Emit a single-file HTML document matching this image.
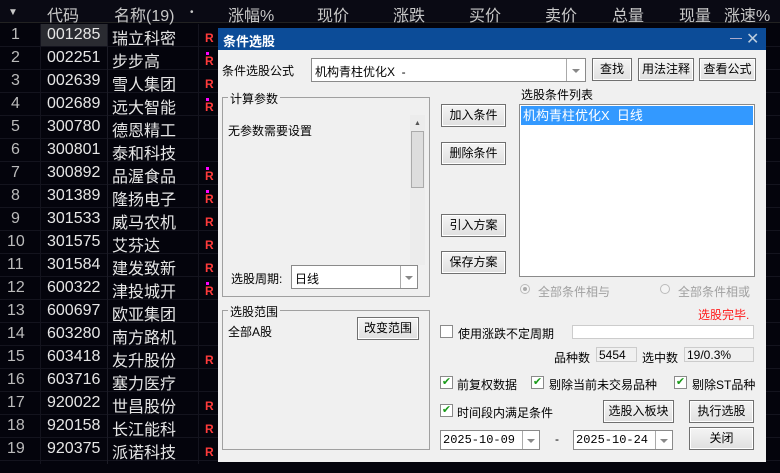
<!DOCTYPE html>
<html><head><meta charset="utf-8"><style>
*{margin:0;padding:0;box-sizing:border-box}
body{width:780px;height:473px;background:#04040c;overflow:hidden;position:relative;font-family:"Liberation Sans","Noto Sans CJK SC",sans-serif}
.a{position:absolute;white-space:nowrap}
.hd{color:#c8c8c8;font-size:16px;top:2px}
.t{font-size:16px;color:#e6e6e6}
.n{font-size:16px;color:#bbb}
.r{color:#ff3b3b;font-size:12px;font-weight:bold}
.m{width:3px;height:3px;background:#f0f}
#dlg{position:absolute;left:218px;top:28px;width:548px;height:434px;background:#f0f0f0;font-size:12px;color:#000}
.d{position:absolute;white-space:nowrap;font-size:12px}
.btn{position:absolute;border:1px solid #707070;background:linear-gradient(#f4f4f4,#e0e0e0);box-shadow:inset 0 0 0 1px #fff;text-align:center;font-size:12px;line-height:21px}
.box{position:absolute;background:#fff;border:1px solid #8a8a8a}
.grp{position:absolute;border:1px solid #a0a0a0}
.cb{position:absolute;width:13px;height:13px;border:1px solid #8a8a8a;background:#fff;color:#1a9a1a;font-size:11px;line-height:11px;text-align:center}
.arr{position:absolute;width:0;height:0;border-left:4px solid transparent;border-right:4px solid transparent;border-top:4px solid #888}
</style></head><body>
<div class="a" style="left:0;top:0;width:780px;height:23px;background:#0a0a14;border-bottom:1px solid #222"></div>
<div class="a" style="left:40px;top:24px;width:67px;height:22px;background:#2a2b31"></div>
<div class="a hd" style="left:8px;font-size:10px;top:7px">▼</div>
<div class="a hd" style="left:47px">代码</div>
<div class="a hd" style="left:114px">名称(19)</div>
<div class="a hd" style="left:190px;font-size:10px;top:7px">•</div>
<div class="a hd" style="left:228px">涨幅%</div>
<div class="a hd" style="left:317px">现价</div>
<div class="a hd" style="left:393px">涨跌</div>
<div class="a hd" style="left:469px">买价</div>
<div class="a hd" style="left:545px">卖价</div>
<div class="a hd" style="left:612px">总量</div>
<div class="a hd" style="left:679px">现量</div>
<div class="a hd" style="left:724px">涨速%</div>
<div id="rows"></div>
<script>
var d=[["001285","瑞立科密",1,0],["002251","步步高",1,1],["002639","雪人集团",1,0],["002689","远大智能",1,1],["300780","德恩精工",0,0],["300801","泰和科技",0,0],["300892","品渥食品",1,1],["301389","隆扬电子",1,1],["301533","威马农机",1,0],["301575","艾芬达",1,0],["301584","建发致新",1,0],["600322","津投城开",1,1],["600697","欧亚集团",0,0],["603280","南方路机",0,0],["603418","友升股份",1,0],["603716","塞力医疗",0,0],["920022","世昌股份",1,0],["920158","长江能科",1,0],["920375","派诺科技",1,0]];
var h="";for(var i=0;i<d.length;i++){var y=24+23*i;
h+='<div class="a" style="left:0;top:'+(y+22)+'px;width:780px;height:1px;background:#14141e"></div>';
h+='<div class="a n" style="left:'+(i<9?11:7)+'px;top:'+(y+2)+'px">'+(i+1)+'</div>';
h+='<div class="a t" style="left:47px;top:'+(y+2)+'px">'+d[i][0]+'</div>';
h+='<div class="a t" style="left:112px;top:'+(y+1)+'px">'+d[i][1]+'</div>';
if(d[i][2])h+='<div class="a r" style="left:205px;top:'+(y+7)+'px">R</div>';
if(d[i][3])h+='<div class="a m" style="left:206px;top:'+(y+5)+'px"></div>';}
document.getElementById("rows").innerHTML=h;
</script>
<div class="a" style="left:40px;top:24px;width:1px;height:440px;background:#14141e"></div>
<div class="a" style="left:107px;top:24px;width:1px;height:440px;background:#1c1c26"></div>
<div class="a" style="left:198px;top:24px;width:1px;height:440px;background:#14141e"></div>
<div id="dlg">
<div class="d" style="left:0;top:0;width:548px;height:22px;background:#0c4c98"></div>
<div class="d" style="left:5px;top:3px;color:#fff;font-weight:bold;font-size:13px">条件选股</div>
<div class="d" style="left:512px;top:10px;width:12px;height:1px;background:#aac"></div>
<div class="d" style="left:528px;top:1px;color:#bcd;font-size:16px">✕</div>
<div class="d" style="left:4px;top:34px">条件选股公式</div>
<div class="box" style="left:93px;top:30px;width:275px;height:24px"></div>
<div class="d" style="left:97px;top:35px">机构青柱优化X&nbsp;&nbsp;-</div>
<div class="d" style="left:348px;top:31px;width:1px;height:22px;background:#aaa"></div>
<div class="arr" style="left:354px;top:41px"></div>
<div class="btn" style="left:374px;top:30px;width:40px;height:23px">查找</div>
<div class="btn" style="left:420px;top:30px;width:56px;height:23px">用法注释</div>
<div class="btn" style="left:481px;top:30px;width:57px;height:23px">查看公式</div>
<div class="grp" style="left:4px;top:69px;width:208px;height:200px"></div>
<div class="d" style="left:10px;top:62px;background:#f0f0f0;padding:0 2px">计算参数</div>
<div class="d" style="left:10px;top:94px">无参数需要设置</div>
<div class="d" style="left:192px;top:87px;width:15px;height:150px;background:#ececec"></div>
<div class="d" style="left:193px;top:103px;width:13px;height:57px;background:#ddd;border:1px solid #aaa"></div>
<div class="d" style="left:196px;top:92px;font-size:7px;color:#555">▲</div>
<div class="d" style="left:13px;top:242px">选股周期:</div>
<div class="box" style="left:73px;top:237px;width:127px;height:24px"></div>
<div class="d" style="left:77px;top:242px">日线</div>
<div class="d" style="left:182px;top:238px;width:1px;height:22px;background:#aaa"></div>
<div class="arr" style="left:187px;top:248px"></div>
<div class="grp" style="left:4px;top:282px;width:208px;height:140px"></div>
<div class="d" style="left:10px;top:275px;background:#f0f0f0;padding:0 2px">选股范围</div>
<div class="d" style="left:10px;top:295px">全部A股</div>
<div class="btn" style="left:139px;top:289px;width:62px;height:23px">改变范围</div>
<div class="btn" style="left:223px;top:76px;width:65px;height:23px">加入条件</div>
<div class="btn" style="left:223px;top:114px;width:65px;height:23px">删除条件</div>
<div class="btn" style="left:223px;top:186px;width:65px;height:23px">引入方案</div>
<div class="btn" style="left:223px;top:223px;width:65px;height:23px">保存方案</div>
<div class="d" style="left:303px;top:58px">选股条件列表</div>
<div class="box" style="left:301px;top:76px;width:236px;height:173px"></div>
<div class="d" style="left:303px;top:78px;width:232px;height:19px;background:#3399ff;color:#fff;padding-left:2px;line-height:19px;font-size:13px">机构青柱优化X&nbsp;&nbsp;日线</div>
<div class="d" style="left:302px;top:256px;width:10px;height:10px;border-radius:50%;border:1px solid #bbb;background:#f4f4f4"></div>
<div class="d" style="left:305px;top:259px;width:4px;height:4px;border-radius:50%;background:#aaa"></div>
<div class="d" style="left:320px;top:255px;color:#a0a0a0">全部条件相与</div>
<div class="d" style="left:442px;top:256px;width:10px;height:10px;border-radius:50%;border:1px solid #bbb;background:#f4f4f4"></div>
<div class="d" style="left:460px;top:255px;color:#a0a0a0">全部条件相或</div>
<div class="d" style="left:480px;top:278px;color:#ff1a1a">选股完毕.</div>
<div class="cb" style="left:222px;top:297px"></div>
<div class="d" style="left:240px;top:297px">使用涨跌不定周期</div>
<div class="box" style="left:354px;top:297px;width:182px;height:14px;border-color:#ccc"></div>
<div class="d" style="left:336px;top:321px">品种数</div>
<div class="d" style="left:378px;top:319px;width:41px;height:15px;border:1px solid #ccc;padding-left:2px;line-height:14px">5454</div>
<div class="d" style="left:424px;top:321px">选中数</div>
<div class="d" style="left:466px;top:319px;width:70px;height:15px;border:1px solid #ccc;padding-left:2px;line-height:14px">19/0.3%</div>
<div class="cb" style="left:222px;top:348px">✔</div>
<div class="d" style="left:239px;top:348px">前复权数据</div>
<div class="cb" style="left:313px;top:348px">✔</div>
<div class="d" style="left:331px;top:348px">剔除当前未交易品种</div>
<div class="cb" style="left:456px;top:348px">✔</div>
<div class="d" style="left:474px;top:348px">剔除ST品种</div>
<div class="cb" style="left:222px;top:376px">✔</div>
<div class="d" style="left:239px;top:376px">时间段内满足条件</div>
<div class="btn" style="left:385px;top:372px;width:71px;height:23px">选股入板块</div>
<div class="btn" style="left:471px;top:372px;width:65px;height:23px">执行选股</div>
<div class="box" style="left:222px;top:402px;width:100px;height:20px"></div>
<div class="d" style="left:225px;top:405px;font-family:'Liberation Mono',monospace">2025-10-09</div>
<div class="d" style="left:304px;top:403px;width:1px;height:18px;background:#aaa"></div>
<div class="arr" style="left:309px;top:411px"></div>
<div class="d" style="left:337px;top:404px">-</div>
<div class="box" style="left:355px;top:402px;width:100px;height:20px"></div>
<div class="d" style="left:358px;top:405px;font-family:'Liberation Mono',monospace">2025-10-24</div>
<div class="d" style="left:437px;top:403px;width:1px;height:18px;background:#aaa"></div>
<div class="arr" style="left:442px;top:411px"></div>
<div class="btn" style="left:471px;top:399px;width:65px;height:23px">关闭</div>
</div>
</body></html>
